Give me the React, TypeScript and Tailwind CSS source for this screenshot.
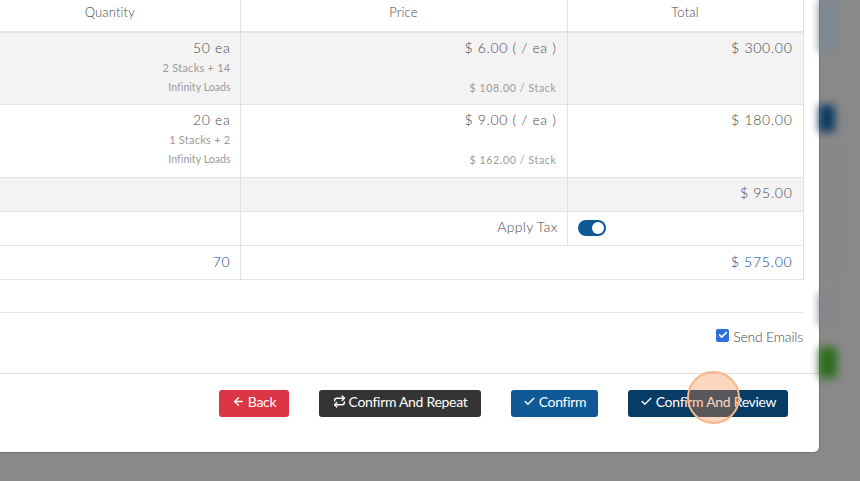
import { ArrowLeft, Check, Repeat } from 'lucide-react';

const font = { fontFamily: 'Lato, sans-serif' };

function Stripe({ children, shaded, h }: { children: React.ReactNode; shaded?: boolean; h: string }) {
  return <tr className={`${shaded ? 'bg-[#f3f3f3]' : 'bg-white'} ${h} border-b border-[#dee2e6]`}>{children}</tr>;
}

function ItemRow({ qty, stacks, price, stackPrice, total, shaded, h }: { qty: string; stacks: string; price: string; stackPrice: string; total: string; shaded?: boolean; h: string }) {
  return (
    <Stripe shaded={shaded} h={h}>
      <td className="border-r border-[#dee2e6] pr-[9px] pt-[4px] align-top text-right">
        <div className="text-[14px] leading-[21px] tracking-[0.7px] text-[#4a4a4a]">{qty}</div>
        <div className="mt-[1px] text-[11px] font-normal leading-[18px] tracking-[0.25px] text-[#9a9a9a]">{stacks}</div>
        <div className="mt-[1px] text-[10.5px] font-normal leading-[19px] tracking-[0.05px] text-[#9a9a9a]">Infinity Loads</div>
      </td>
      <td className="border-r border-[#dee2e6] pr-[10px] pt-[4px] align-top text-right">
        <div className="text-[14px] leading-[21px] tracking-[0.65px] text-[#4a4a4a]">{price}</div>
        <div className="mt-[21px] text-[10.5px] font-normal leading-[19px] tracking-[0.65px] text-[#9a9a9a]">{stackPrice}</div>
      </td>
      <td className="border-r border-[#dee2e6] pr-[10px] pt-[4px] align-top text-right">
        <div className="text-[14px] leading-[21px] tracking-[0.7px] text-[#4a4a4a]">{total}</div>
      </td>
    </Stripe>
  );
}

function ActionButton({ className, icon, label }: { className: string; icon: React.ReactNode; label: string }) {
  return (
    <button className={`flex h-[27px] items-center justify-center gap-[3px] rounded-[3px] pb-[3px] text-[14px] font-normal tracking-[-0.3px] text-white ${className}`}>
      {icon}
      {label}
    </button>
  );
}

export default function App() {
  return (
    <div className="relative flex h-[481px] w-[860px] overflow-hidden bg-[#898989] font-light" style={font}>
      {/* modal */}
      <div className="flex h-[452px] w-[819px] shrink-0 flex-col rounded-br-[5px] bg-white shadow-[0_0_2px_rgba(0,0,0,0.5)]">
        <table className="w-[803px] table-fixed border-collapse">
          <colgroup>
            <col className="w-[240px]" />
            <col className="w-[327px]" />
            <col className="w-[236px]" />
          </colgroup>
          <thead>
            <tr className="h-[32px] border-b-2 border-[#dee2e6] bg-white text-[13px] tracking-[0.15px] text-[#4a4a4a]">
              <th className="border-r border-[#dee2e6] pb-[5px] pr-[20px] text-center font-light">Quantity</th>
              <th className="border-r border-[#dee2e6] pb-[5px] text-center font-light">Price</th>
              <th className="border-r border-[#dee2e6] pb-[5px] text-center font-light">Total</th>
            </tr>
          </thead>
          <tbody>
            <ItemRow shaded h="h-[72px]" qty="50 ea" stacks="2 Stacks + 14" price="$ 6.00 ( / ea )" stackPrice="$ 108.00 / Stack" total="$ 300.00" />
            <ItemRow h="h-[73px]" qty="20 ea" stacks="1 Stacks + 2" price="$ 9.00 ( / ea )" stackPrice="$ 162.00 / Stack" total="$ 180.00" />
            <Stripe shaded h="h-[34px]">
              <td className="border-r border-[#dee2e6]" />
              <td className="border-r border-[#dee2e6]" />
              <td className="border-r border-[#dee2e6] pb-[3px] pr-[10px] text-right text-[14px] tracking-[0.7px] text-[#4a4a4a]">$ 95.00</td>
            </Stripe>
            <Stripe h="h-[34px]">
              <td className="border-r border-[#dee2e6]" />
              <td className="border-r border-[#dee2e6] pb-[3px] pr-[9px] text-right text-[14px] tracking-[0.3px] text-[#4a4a4a]">Apply Tax</td>
              <td className="border-r border-[#dee2e6] pl-[10px]">
                <div className="flex h-[16px] w-[28px] items-center justify-end rounded-full bg-[#0f5a96] pr-[2px]">
                  <div className="h-[12px] w-[12px] rounded-full bg-white" />
                </div>
              </td>
            </Stripe>
            <Stripe h="h-[34px]">
              <td className="border-r border-[#dee2e6] pb-[2px] pr-[9px] text-right text-[14px] tracking-[0.75px] text-[#0b4590]">70</td>
              <td colSpan={2} className="border-r border-[#dee2e6] pb-[2px] pr-[10px] text-right text-[14px] tracking-[0.75px] text-[#0b4590]">$ 575.00</td>
            </Stripe>
          </tbody>
        </table>

        <div className="mt-[32px] w-[803px] border-t border-[#e5e5e5]" />

        <div className="flex h-[60px] w-[803px] items-start justify-end pt-[14px]">
          <label className="flex items-center gap-[4px] text-[14px] leading-[20px] tracking-[-0.2px] text-[#4a4a4a]">
            <span className="mb-[3px] flex h-[13px] w-[13px] items-center justify-center rounded-[2px] bg-[#2f6fdd]">
              <Check size={10} strokeWidth={4} className="text-white" />
            </span>
            Send Emails
          </label>
        </div>

        <div className="flex h-[79px] items-start border-t border-[#dedede] pl-[219px] pt-[16px]">
          <ActionButton className="w-[70px] bg-[#dc3545]" icon={<ArrowLeft size={13} strokeWidth={2.5} />} label="Back" />
          <ActionButton className="ml-[30px] w-[162px] bg-[#343434]" icon={<Repeat size={13} strokeWidth={2.5} />} label="Confirm And Repeat" />
          <ActionButton className="ml-[30px] w-[87px] bg-[#0f5a96]" icon={<Check size={13} strokeWidth={2.5} />} label="Confirm" />
          <ActionButton className="ml-[30px] w-[160px] bg-[#063c66]" icon={<Check size={13} strokeWidth={2.5} />} label="Confirm And Review" />
        </div>
      </div>

      {/* blurred page behind the overlay */}
      <div className="flex flex-1 flex-col blur-[4px]">
        <div className="h-[52px] w-[17px] bg-[#7c8894]" />
        <div className="mt-[53px] h-[27px] w-[16px] rounded-r-[4px] bg-[#0a3a62]" />
        <div className="ml-[14px] mt-[8px] h-[140px] w-[3px] bg-[#808080]" />
        <div className="mt-[13px] h-[32px] w-[17px] rounded-r-[6px] bg-[#85878c]" />
        <div className="mt-[22px] h-[31px] w-[18px] rounded-r-[4px] bg-[#2c6e1c]" />
      </div>

      {/* click highlight */}
      <div className="absolute left-[687px] top-[371px] h-[53px] w-[53px] rounded-full border-2 border-[#f7b78a] bg-[#f58a42]/35" />
    </div>
  );
}
